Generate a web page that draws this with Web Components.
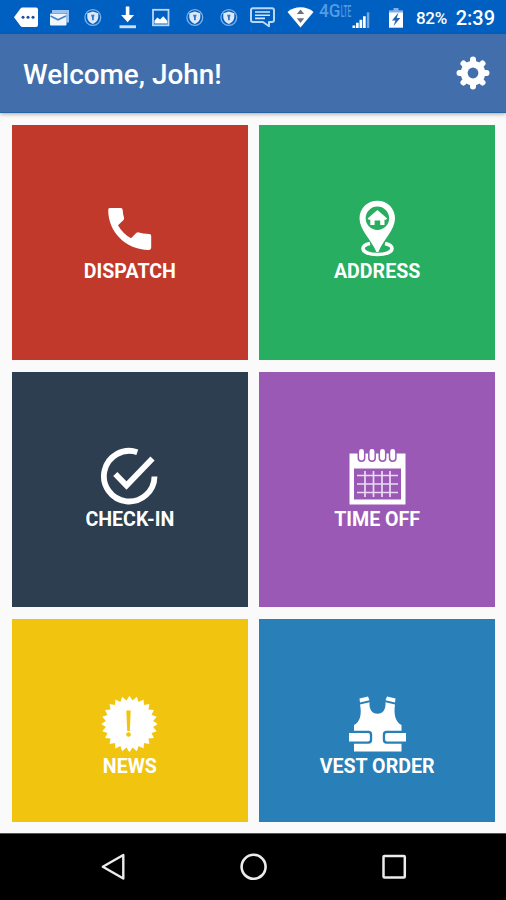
<!DOCTYPE html>
<html lang="en">
<head>
<meta charset="utf-8">
<title>Home</title>
<style>
  body{
    margin: 0;
    height: 900px;
    overflow: hidden;
    font-family: Roboto, sans-serif;
    color: #fff;
  }
</style>
</head>
<body>
<home-screen></home-screen>

<script>
const icons = {
  tag: `<path fill="#fff" d="M6 17.300 12.500 8.500Q13.200 7.500 14.500 7.500H28Q30 7.500 30 9.500V25Q30 27 28 27H14.500Q13.200 27 12.500 26Z"/>
    <g fill="#1d4fa5"><circle cx="15" cy="17.200" r="1.500"/><circle cx="20" cy="17.200" r="1.500"/><circle cx="25" cy="17.200" r="1.500"/></g>`,
  mail: `<path fill="#9cc2ee" d="M10 10H27V22.500H24.500V13H10Z"/>
    <rect x="8" y="13.500" width="16.500" height="12" rx="1" fill="#f0f6fd"/>
    <path fill="none" stroke="#4b83ca" stroke-width="1.600" d="m8.500 16 7.500 3.800 8-3.800"/>`,
  shield: `<circle cx="16.800" cy="17.500" r="7.900" fill="none" stroke="#7fb0e8" stroke-width="1.300"/>
    <path fill="#dbe9fb" d="m16.800 11.500 5.500 1.800v3.900c0 3-2.300 5.300-5.500 6.900-3.200-1.600-5.500-3.900-5.500-6.900v-3.900Z"/>
    <path fill="#3779c8" d="M15 14.800h3.600l-.8 2.900v2.600h-1.800v-2.600Z"/>`,
  download: `<path fill="#fff" d="M15.800 6.500h3.600V15h4.700l-6.500 7.300-6.500-7.300h4.700Z"/><path fill="#c9dff8" d="M9.500 25.300h16.500v2.900H9.500Z"/>`,
  image: `<rect x="9" y="9.800" width="15.500" height="15.500" fill="none" stroke="#bad5f6" stroke-width="1.800"/>
    <path fill="#fff" d="m10.500 23.500v-3l3-3 2.500 2 3.300-3.200 4 4.700v2.500Z"/>`,
  chat: `<path fill="none" stroke="#bbd6f5" stroke-width="2" stroke-linejoin="round" d="M7 8.300H26Q28 8.300 28 10.300V20Q28 22 26 22H23V26.300L17 22H7Q5 22 5 20V10.300Q5 8.300 7 8.300Z"/>
    <path stroke="#d5e6fa" stroke-width="1.600" d="M9 12h15M9 15.200h15M9 18.400h10"/>`,
  wifi: `<path fill="#fff" d="M7.500 12C14.500 5.800 26.500 5.800 33.500 12L20.500 27.500Z"/>
    <path fill="#6b6f78" d="m20.500 9.500 3.700 4.500h-7.400ZM20.500 23l-3.700-4.700h7.400Z"/>`,
  network: `<g fill="#559be2" font-family="Roboto, sans-serif" font-weight="500">
      <text x="3" y="17.300" font-size="17.500" textLength="21.500" lengthAdjust="spacingAndGlyphs">4G</text>
      <text x="24.800" y="17" font-size="16" textLength="10.500" lengthAdjust="spacingAndGlyphs">LTE</text>
    </g>
    <g fill="#fff"><path d="M36.500 25.500h2.700V28h-2.700ZM40 22.800h2.700V28H40ZM43.500 19.800h2.700V28h-2.700ZM47 16.300h2.700V28H47Z"/><path opacity=".45" d="M50.800 12.300h2.500V28h-2.500Z"/></g>`,
  battery: `<path fill="#7eb1eb" d="M10.500 8h5v2.300H20V13H6v-2.700h4.500Z"/><path fill="#fff" d="M6 12.500h14V27.700H6Z"/>
    <path fill="#1f62b6" d="m15.500 12.500-6.500 8h3.500l-2 5.500 6.800-8h-3.600Z"/>`,
  gear: `<path stroke="#fff" stroke-width="6" stroke-linecap="round" d="M17 3.500V30.500M3.500 17H30.500M7.500 7.500 26.500 26.500M26.500 7.500 7.500 26.500"/>
    <circle cx="17" cy="17" r="12.300" fill="#fff"/><circle cx="17" cy="17" r="5.400" fill="#426fab"/>`,
  phone: `<path fill="#fff" transform="translate(1.200 0)" d="M9.500 9H20.500Q22.400 9 22.500 11 22.700 15 23.800 18.500 24.200 20 23.100 21.200L17.800 26.300Q22.300 34.500 30.800 39.300L36 34.100Q37.200 33 38.700 33.500 42.300 34.600 49 34.900 51 35 51 37V48Q51 51 48.500 51C25.500 50.500 8 33 8 11Q8 9 9.500 9Z"/>`,
  pin: `<path fill="#fff" fill-rule="evenodd" d="M30.400 1.700C40.500 1.700 48 9.500 48 19.200 48 31 36.500 40 31.400 53H29.400C24 40 12.500 31 12.500 19.200 12.500 9.500 20.200 1.700 30.400 1.700ZM30.400 7.500A11.700 11.700 0 1 0 30.400 30.900 11.700 11.700 0 0 0 30.400 7.500Z"/>
    <path fill="#fff" d="m30.400 11 9.800 8.500-1.200 1.200h-1.500V26h-4.300v-4.400h-5.600V26h-4.300v-5.300H21.800L20.600 19.500Z"/>
    <path fill="none" stroke="#fff" stroke-width="3.600" d="M23 44.400C18 45.400 16 47.500 16 49.500 16 53 22 55.500 30.400 55.500S45 53 45 49.500C45 47.500 42.800 45.400 38 44.400"/>`,
  check: `<path fill="none" stroke="#fff" stroke-width="5.800" d="M38.300 6.200A25.300 25.300 0 1 0 55.500 30.500"/>
    <path fill="none" stroke="#fff" stroke-width="5.800" d="M16.300 28 27.500 39.500 53.500 12.500"/>`,
  calendar: `<path fill="#fff" d="M2.500 7.500H58.500V58.500H2.500Z"/><path fill="#9b59b6" d="M7 22.500h47v31H7Z"/>
    <g fill="#fff" stroke="#9b59b6" stroke-width="1.500"><rect x="11.300" y="2.300" width="6.400" height="13" rx="3.200"/><rect x="21.800" y="2.300" width="6.400" height="13" rx="3.200"/><rect x="32.300" y="2.300" width="6.400" height="13" rx="3.200"/><rect x="42.500" y="2.300" width="6.400" height="13" rx="3.200"/></g>
    <path stroke="#eadbf1" stroke-width="1.700" d="M10 29.500h41M10 38h41M10 46.500h41M18 25v26M26.500 25v26M35 25v26M43 25v26"/>`,
  badge: `<path fill="#fff" d="${burst(30.5, 31, 24, 28.2, 23.8)}"/>
    <path fill="#f1c40f" d="M27.300 17.500h4.400l-.9 20.500h-2.600Z"/><circle cx="29.500" cy="41.500" r="2.300" fill="#f1c40f"/>`,
  vest: `<g fill="#fff"><path d="m12.500 5.500 8.500-2 1.500 3.700-9.500 2.300ZM48.500 5.500l-8.500-2-1.500 3.700 9.500 2.300Z"/>
    <path d="m13 11.500 9.500-2.300c-.5 7 2.500 11.500 8 11.500s8.500-4.500 8-11.500l9.500 2.300c-1.500 10 .5 17.500 6.500 20.500v26.500H7V32c6-3 8-10.500 6-20.500Z"/></g>
    <path fill="#2980b9" d="M6 37.700H21.500Q25.200 37.700 25.200 41.400V47Q25.200 50.700 21.500 50.700H6ZM55.500 37.700H39.500Q35.800 37.700 35.800 41.400V47Q35.800 50.700 39.500 50.700H55.500Z"/>
    <path fill="#fff" d="M2 40H21Q22.900 40 22.900 42V46.500Q22.900 48.500 21 48.500H2ZM59 40H40Q38.100 40 38.100 42V46.500Q38.100 48.500 40 48.500H59Z"/>`,
  back: `<path fill="none" stroke="#ececec" stroke-width="2.400" stroke-linejoin="round" d="M23.300 8V31.500L2.800 19.800Z"/>`,
  home: `<circle cx="19.600" cy="19.800" r="12" fill="none" stroke="#ececec" stroke-width="2.600"/>`,
  recent: `<rect x="3.500" y="9" width="21.300" height="21.500" rx="1" fill="none" stroke="#ececec" stroke-width="2.500"/>`
};

// star outline with many short points
function burst(cx, cy, points, outer, inner) {
  let d = '';
  for (let i = 0; i < points * 2; i++) {
    const r = i % 2 ? inner : outer;
    const a = Math.PI * i / points - Math.PI / 2;
    d += (i ? 'L' : 'M') + (cx + r * Math.cos(a)).toFixed(2) + ' ' + (cy + r * Math.sin(a)).toFixed(2);
  }
  return d + 'Z';
}

class AppIcon extends HTMLElement {
  constructor() {
    super();
    this.attachShadow({ mode: 'open' });
  }

  connectedCallback() {
    const w = this.getAttribute('w');
    const h = this.getAttribute('h');
    this.shadowRoot.innerHTML = `
<style>
  :host{
    display: block;
    flex: none;
    width: ${w}px;
    height: ${h}px;
  }
  svg{
    display: block;
  }
</style>
<svg width="${w}" height="${h}" viewBox="0 0 ${w} ${h}">${icons[this.getAttribute('name')]}</svg>`;
  }
}
customElements.define('app-icon', AppIcon);

class StatusBar extends HTMLElement {
  constructor() {
    super();
    this.attachShadow({ mode: 'open' }).innerHTML = `
<style>
  :host{
    display: flex;
    box-sizing: border-box;
    height: 34px;
    padding: 0 11px 0 8px;
    background: #0060c1;
    line-height: 36px;
    white-space: nowrap;
  }
  .level{
    margin-left: 5px;
    font-size: 17px;
    font-weight: 500;
    width: 32px;
    letter-spacing: -0.3px;
  }
  .clock{
    margin-left: auto;
    font-size: 20px;
    font-weight: 500;
  }
</style>
<app-icon name="tag" w="34" h="34"></app-icon>
<app-icon name="mail" w="34" h="34"></app-icon>
<app-icon name="shield" w="34" h="34"></app-icon>
<app-icon name="download" w="34" h="34"></app-icon>
<app-icon name="image" w="34" h="34"></app-icon>
<app-icon name="shield" w="34" h="34"></app-icon>
<app-icon name="shield" w="34" h="34"></app-icon>
<app-icon name="chat" w="34" h="34"></app-icon>
<app-icon name="wifi" w="36" h="34"></app-icon>
<app-icon name="network" w="67" h="34"></app-icon>
<app-icon name="battery" w="28" h="34"></app-icon>
<div class="level">82%</div>
<div class="clock">2:39</div>`;
  }
}
customElements.define('status-bar', StatusBar);

class AppHeader extends HTMLElement {
  constructor() {
    super();
    this.attachShadow({ mode: 'open' }).innerHTML = `
<style>
  :host{
    display: flex;
    align-items: center;
    justify-content: space-between;
    box-sizing: border-box;
    height: 79px;
    padding: 0 16px 0 23px;
    background: #426fab;
    border-bottom: 1px solid #2565a5;
    box-shadow: 0 1px 4px rgba(70, 55, 35, 0.45);
  }
  .title{
    font-size: 27.9px;
    font-weight: 500;
    padding-top: 3px;
  }
</style>
<div class="title"><slot></slot></div>
<app-icon name="gear" w="34" h="34"></app-icon>`;
  }
}
customElements.define('app-header', AppHeader);

class MenuTile extends HTMLElement {
  constructor() {
    super();
    this.attachShadow({ mode: 'open' });
  }

  connectedCallback() {
    this.shadowRoot.innerHTML = `
<style>
  :host{
    display: flex;
    flex-direction: column;
    align-items: center;
    box-sizing: border-box;
    padding-top: 74px;
    background: ${this.getAttribute('color')};
  }
  .label{
    height: 24px;
    margin-top: 1.7px;
    line-height: 24px;
    font-size: 19.6px;
    font-weight: 700;
    white-space: nowrap;
  }
</style>
<app-icon name="${this.getAttribute('icon')}" w="61" h="60"></app-icon>
<div class="label"><slot></slot></div>`;
  }
}
customElements.define('menu-tile', MenuTile);

class NavBar extends HTMLElement {
  constructor() {
    super();
    this.attachShadow({ mode: 'open' }).innerHTML = `
<style>
  :host{
    display: flex;
    justify-content: space-between;
    box-sizing: border-box;
    height: 67px;
    padding: 13px 98px 0 100px;
    background: #000;
    border-top: 1px solid #555;
  }
</style>
<app-icon name="back" w="27" h="40"></app-icon>
<app-icon name="home" w="40" h="40"></app-icon>
<app-icon name="recent" w="28" h="40"></app-icon>`;
  }
}
customElements.define('nav-bar', NavBar);

class HomeScreen extends HTMLElement {
  constructor() {
    super();
    this.attachShadow({ mode: 'open' }).innerHTML = `
<style>
  :host{
    display: flex;
    flex-direction: column;
    width: 506px;
    height: 900px;
    background: #fafafa;
  }
  .tiles{
    flex: 1;
    display: grid;
    grid-template-columns: 1fr 1fr;
    grid-template-rows: 235.5px 235.5px 1fr;
    gap: 11.8px 11.5px;
    padding: 11.7px 11px 11.5px 12px;
  }
</style>
<status-bar></status-bar>
<app-header>Welcome, John!</app-header>
<div class="tiles">
  <menu-tile icon="phone" color="#c0392b">DISPATCH</menu-tile>
  <menu-tile icon="pin" color="#27ae60">ADDRESS</menu-tile>
  <menu-tile icon="check" color="#2c3e50">CHECK-IN</menu-tile>
  <menu-tile icon="calendar" color="#9b59b6">TIME OFF</menu-tile>
  <menu-tile icon="badge" color="#f1c40f">NEWS</menu-tile>
  <menu-tile icon="vest" color="#2980b9">VEST ORDER</menu-tile>
</div>
<nav-bar></nav-bar>`;
  }
}
customElements.define('home-screen', HomeScreen);
</script>
</body>
</html>
